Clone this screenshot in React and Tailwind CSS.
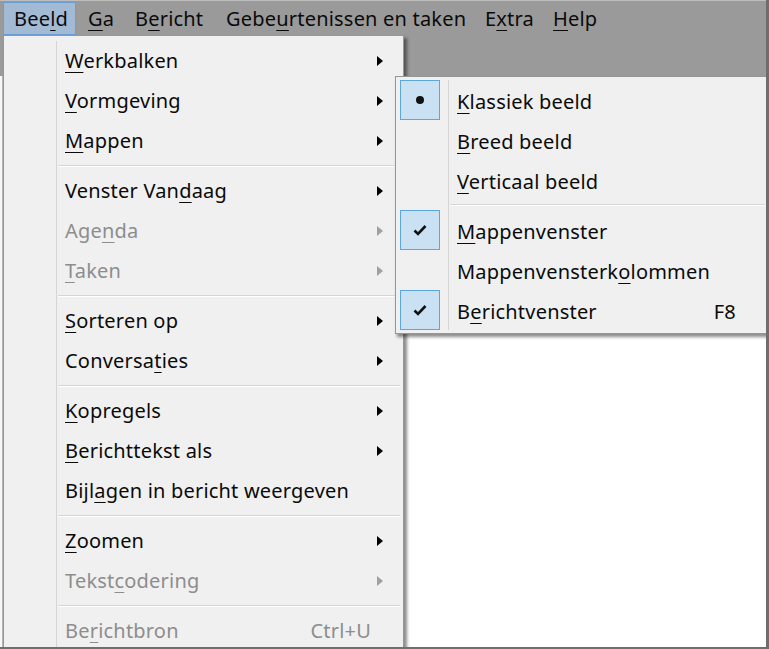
import React from 'react'

const menuBar = [
  { label: 'Beeld', k: 3, w: 'w-[73px]', active: true },
  { label: 'Ga', k: 0, w: 'w-[45px]' },
  { label: 'Bericht', k: 1, w: 'w-[89px]' },
  { label: 'Gebeurtenissen en taken', k: 4, w: 'w-[257px]' },
  { label: 'Extra', k: 1, w: 'w-[66px]' },
  { label: 'Help', k: 0, w: 'w-[66px]' },
]

const viewItems = [
  { label: 'Werkbalken', k: 0, arrow: true },
  { label: 'Vormgeving', k: 0, arrow: true },
  { label: 'Mappen', k: 0, arrow: true },
  { sep: true },
  { label: 'Venster Vandaag', k: 11, arrow: true },
  { label: 'Agenda', k: 3, arrow: true, disabled: true },
  { label: 'Taken', k: 0, arrow: true, disabled: true },
  { sep: true },
  { label: 'Sorteren op', k: 0, arrow: true },
  { label: 'Conversaties', k: 8, arrow: true },
  { sep: true },
  { label: 'Kopregels', k: 0, arrow: true },
  { label: 'Berichttekst als', k: 0, arrow: true },
  { label: 'Bijlagen in bericht weergeven', k: 4 },
  { sep: true },
  { label: 'Zoomen', k: 0, arrow: true },
  { label: 'Tekstcodering', k: 5, arrow: true, disabled: true },
  { sep: true },
  { label: 'Berichtbron', k: 2, shortcut: 'Ctrl+U', disabled: true },
]

const layoutItems = [
  { label: 'Klassiek beeld', k: 0, mark: 'dot' },
  { label: 'Breed beeld', k: 0 },
  { label: 'Verticaal beeld', k: 0 },
  { sep: true },
  { label: 'Mappenvenster', k: 0, mark: 'check' },
  { label: 'Mappenvensterkolommen', k: 14 },
  { label: 'Berichtvenster', k: 1, mark: 'check', shortcut: 'F8' },
]

function Acc({ text, k }) {
  return (
    <>
      {text.slice(0, k)}
      <span className="underline decoration-1 underline-offset-[4px]">{text[k]}</span>
      {text.slice(k + 1)}
    </>
  )
}

function Arrow({ disabled }) {
  return (
    <svg width="6" height="10" viewBox="0 0 6 10">
      <path d="M0 0L6 5L0 10Z" fill={disabled ? '#a0a0a0' : '#000'} />
    </svg>
  )
}

function Mark({ type }) {
  return (
    <div className="ml-[4px] flex h-10 w-10 items-center justify-center border border-[#5aa7dc] bg-[#c9e1f3]">
      {type === 'dot' ? (
        <svg width="10" height="10" viewBox="0 0 10 10">
          <circle cx="5" cy="5" r="4" fill="#111" />
        </svg>
      ) : (
        <svg width="14" height="12" viewBox="0 0 14 12">
          <path d="M1.5 6.5L5 10L12.5 2" fill="none" stroke="#111" strokeWidth="2.6" />
        </svg>
      )}
    </div>
  )
}

function Separator() {
  return (
    <div className="flex h-[10px]">
      <div className="w-[53px] shrink-0 border-r border-[#d5d5d5]" />
      <div className="flex flex-1 items-center pl-[1px] pr-[3px]">
        <div className="h-[2px] w-full border-t border-b border-t-[#d5d5d5] border-b-white" />
      </div>
    </div>
  )
}

function Row({ item, textPad }) {
  return (
    <div className="flex h-10">
      <div className="w-[53px] shrink-0 border-r border-[#d5d5d5]">
        {item.mark && <Mark type={item.mark} />}
      </div>
      <div
        className={`flex flex-1 items-center pl-[8px] pr-[20px] ${textPad} ${
          item.disabled ? 'text-[#8d8d8d]' : 'text-[#0a0a0a]'
        }`}
      >
        <span className="flex-1 whitespace-nowrap">
          <Acc text={item.label} k={item.k} />
        </span>
        {item.shortcut && <span className="mr-[6px] whitespace-nowrap">{item.shortcut}</span>}
        <span className="flex w-[6px] items-center">{item.arrow && <Arrow disabled={item.disabled} />}</span>
      </div>
    </div>
  )
}

export default function App() {
  return (
    <div className="relative h-[649px] w-[769px] overflow-hidden border-r-[3px] border-b-2 border-[#6e6e6e] bg-white font-['Noto_Sans',sans-serif] text-[20px] leading-none tracking-[0.2px]">
      {/* gray top band: menubar + dimmed toolbar area */}
      <div className="h-[76px] border-t border-[#bdbdbd] bg-[#9a9a9a]">
        <div className="flex h-[34px] items-stretch pl-[3px] pt-px">
          {menuBar.map((m) => (
            <div
              key={m.label}
              className={`${m.w} mr-[2px] flex items-center whitespace-nowrap pl-[10px] text-[#0a0a0a] ${
                m.active ? 'border border-[#6a9dd1] bg-[#a3bad4]' : ''
              }`}
            >
              <Acc text={m.label} k={m.k} />
            </div>
          ))}
        </div>
      </div>
      <div className="flex h-full w-[3px] border-r border-[#b5b5b5] bg-[#f7f7f7]" />

      {/* Beeld dropdown */}
      <div className="absolute left-[3px] top-[35px] w-[401px] border border-[#979797] bg-[#f0f0f0] pt-[5px] pb-[4px] shadow-[3px_3px_3px_rgba(0,0,0,0.45)]">
        {viewItems.map((it, i) => (it.sep ? <Separator key={i} /> : <Row key={i} item={it} textPad="" />))}
      </div>

      {/* Vormgeving submenu */}
      <div className="absolute left-[395px] top-[76px] w-[374px] border border-[#979797] bg-[#f0f0f0] pt-[3px] pb-[3px] shadow-[2px_3px_3px_rgba(0,0,0,0.45)]">
        {layoutItems.map((it, i) => (it.sep ? <Separator key={i} /> : <Row key={i} item={it} textPad="pt-[4px]" />))}
      </div>
    </div>
  )
}
